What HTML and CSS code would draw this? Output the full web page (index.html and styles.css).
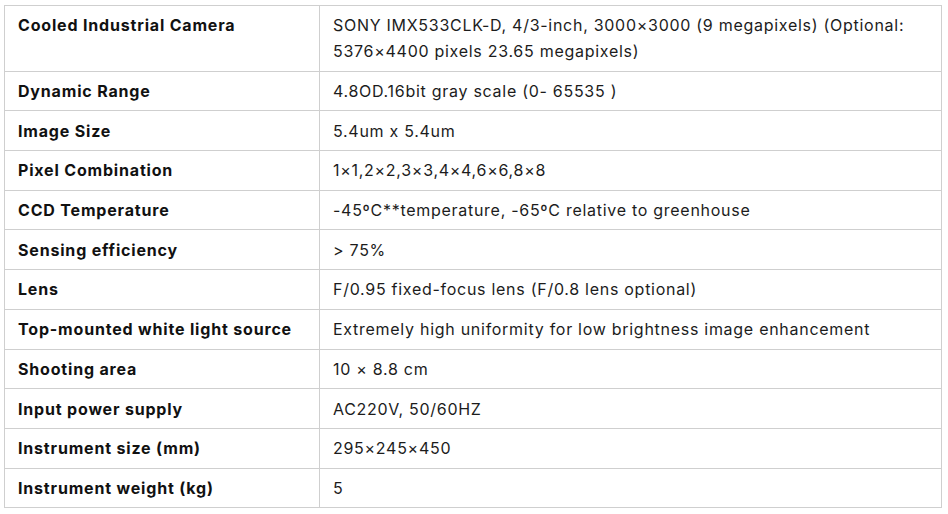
FILE: index.html
```html
<!DOCTYPE html>
<html>
<head>
<meta charset="utf-8">
<link rel="stylesheet" href="styles.css">
</head>
<body>
<div class="wrap">
<table class="spec">
<tbody>
<tr><th>Cooled Industrial Camera</th><td>SONY IMX533CLK-D, 4/3-inch, 3000×3000 (9 megapixels) (Optional: 5376×4400 pixels 23.65 megapixels)</td></tr>
<tr><th>Dynamic Range</th><td>4.8OD.16bit gray scale (0- 65535 )</td></tr>
<tr><th>Image Size</th><td>5.4um x 5.4um</td></tr>
<tr><th>Pixel Combination</th><td>1×1,2×2,3×3,4×4,6×6,8×8</td></tr>
<tr><th>CCD Temperature</th><td>-45ºC**temperature, -65ºC relative to greenhouse</td></tr>
<tr><th>Sensing efficiency</th><td>&gt; 75%</td></tr>
<tr><th>Lens</th><td>F/0.95 fixed-focus lens (F/0.8 lens optional)</td></tr>
<tr><th>Top-mounted white light source</th><td>Extremely high uniformity for low brightness image enhancement</td></tr>
<tr><th>Shooting area</th><td>10 × 8.8 cm</td></tr>
<tr><th>Input power supply</th><td>AC220V, 50/60HZ</td></tr>
<tr><th>Instrument size (mm)</th><td>295×245×450</td></tr>
<tr><th>Instrument weight (kg)</th><td>5</td></tr>
</tbody>
</table>
</div>
</body>
</html>
```

FILE: styles.css
```css
html, body {
  margin: 0;
  padding: 0;
  background: #fff;
}
.wrap {
  padding: 5px 6px 0 4px;
}
.spec {
  width: 938px;
  border-collapse: collapse;
  font-family: Inter, "Liberation Sans", sans-serif;
  font-size: 16px;
  line-height: 26px;
  color: #1c1c1c;
  table-layout: fixed;
}
.spec th, .spec td {
  border: 1px solid #cfcfcf;
  padding: 6.35px 13px;
  text-align: left;
  vertical-align: top;
}
.spec th {
  width: 288px;
  font-weight: 700;
  color: #111;
  letter-spacing: 0.82px;
}
.spec td {
  font-weight: 400;
  letter-spacing: 0.72px;
}
```
